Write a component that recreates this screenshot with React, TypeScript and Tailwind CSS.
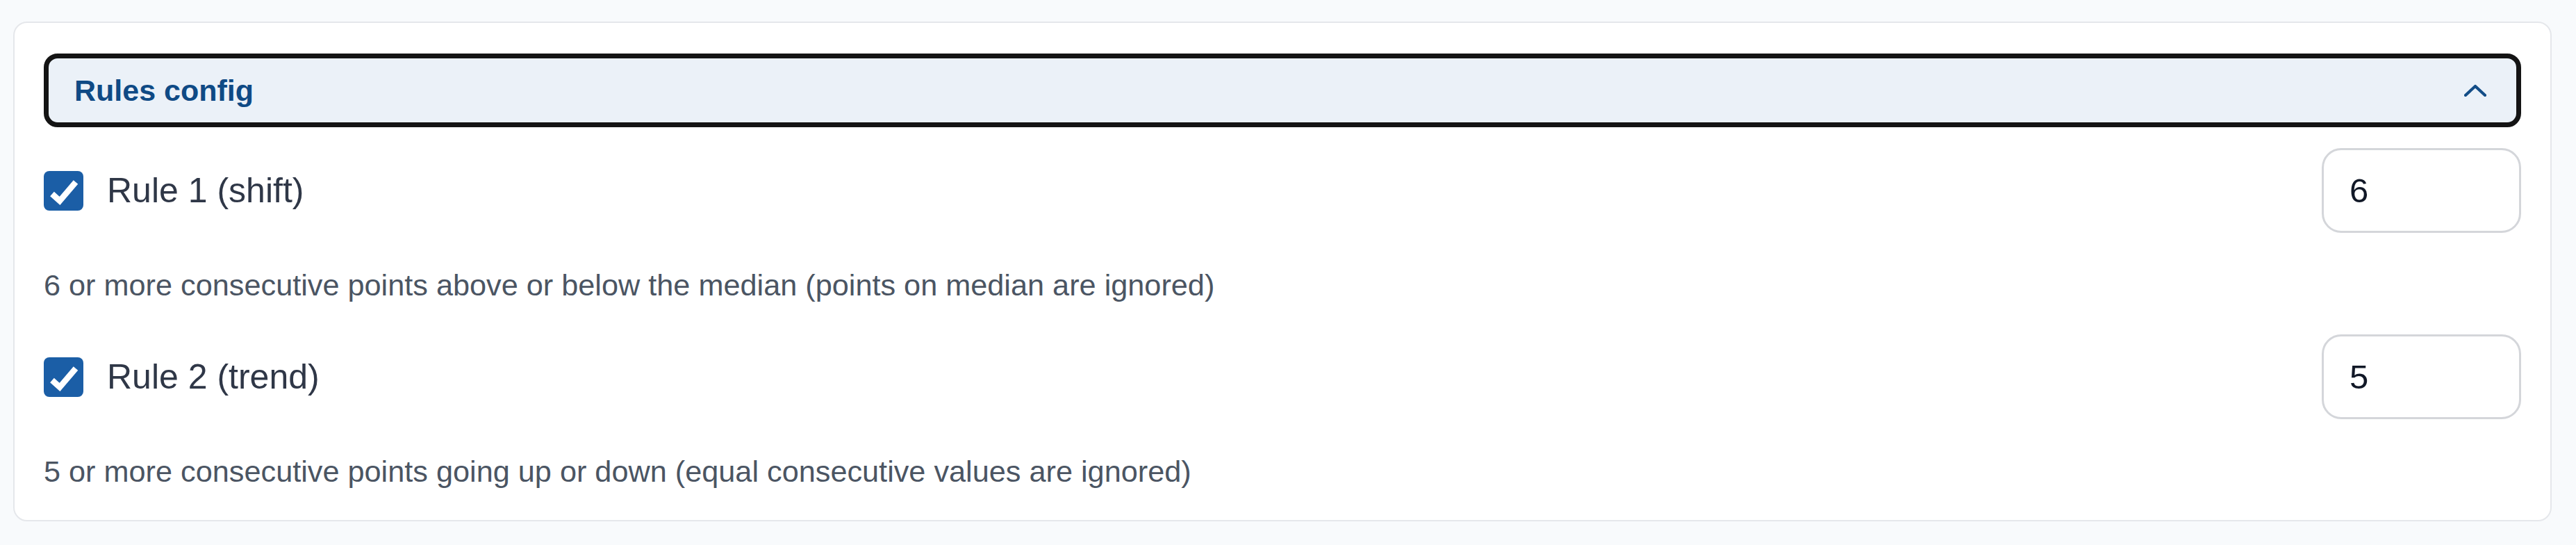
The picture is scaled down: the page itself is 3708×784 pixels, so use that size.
import React from "react";

const rules = [
  {
    label: "Rule 1 (shift)",
    value: "6",
    desc: "6 or more consecutive points above or below the median (points on median are ignored)",
  },
  {
    label: "Rule 2 (trend)",
    value: "5",
    desc: "5 or more consecutive points going up or down (equal consecutive values are ignored)",
  },
];

function CheckBox() {
  return (
    <div className="w-[57px] h-[57px] rounded-[8px] bg-[#1b5ea6] flex items-center justify-center shrink-0">
      <svg width="57" height="57" viewBox="0 0 57 57">
        <polyline
          points="12,33 23,43 46,16"
          fill="none"
          stroke="#ffffff"
          strokeWidth="8.5"
          strokeLinejoin="miter"
          strokeLinecap="butt"
        />
      </svg>
    </div>
  );
}

export default function App() {
  return (
    <div
      className="w-[3708px] h-[784px] bg-[#f8fafc] pl-[19px] pr-[35px] pt-[31px]"
      style={{ fontFamily: '"Liberation Sans", Arial, Helvetica, sans-serif' }}
    >
      <div className="h-[719px] rounded-[20px] border-2 border-[#e5e7eb] bg-white px-[42px] pt-[44px]">
        <div className="h-[106px] rounded-[20px] border-[7px] border-[#141414] bg-[#ebf1f8] flex items-center justify-between pl-[37px] pr-[43px]">
          <span className="text-[43px] font-bold text-[#0f4a85] leading-none">Rules config</span>
          <svg width="32" height="18" viewBox="0 0 32 18">
            <polyline
              points="2,16 16,3 30,16"
              fill="none"
              stroke="#134d87"
              strokeWidth="4.2"
              strokeLinecap="round"
              strokeLinejoin="round"
            />
          </svg>
        </div>
        <div className="mt-[30px] flex flex-col gap-[37px]">
          {rules.map((r) => (
            <div key={r.label} className="flex flex-col">
              <div className="h-[122px] flex items-center justify-between">
                <div className="flex items-center gap-[34px]">
                  <CheckBox />
                  <span className="text-[50px] leading-none text-[#2f3747]">{r.label}</span>
                </div>
                <div className="w-[287px] h-[122px] rounded-[28px] border-[3px] border-[#d4d6da] bg-white flex items-center pl-[37px]">
                  <span className="text-[49px] leading-none text-[#111827]">{r.value}</span>
                </div>
              </div>
              <div className="mt-[43px] h-[66px] flex items-center text-[43.25px] text-[#4b5563] leading-none whitespace-nowrap">
                {r.desc}
              </div>
            </div>
          ))}
        </div>
      </div>
    </div>
  );
}
